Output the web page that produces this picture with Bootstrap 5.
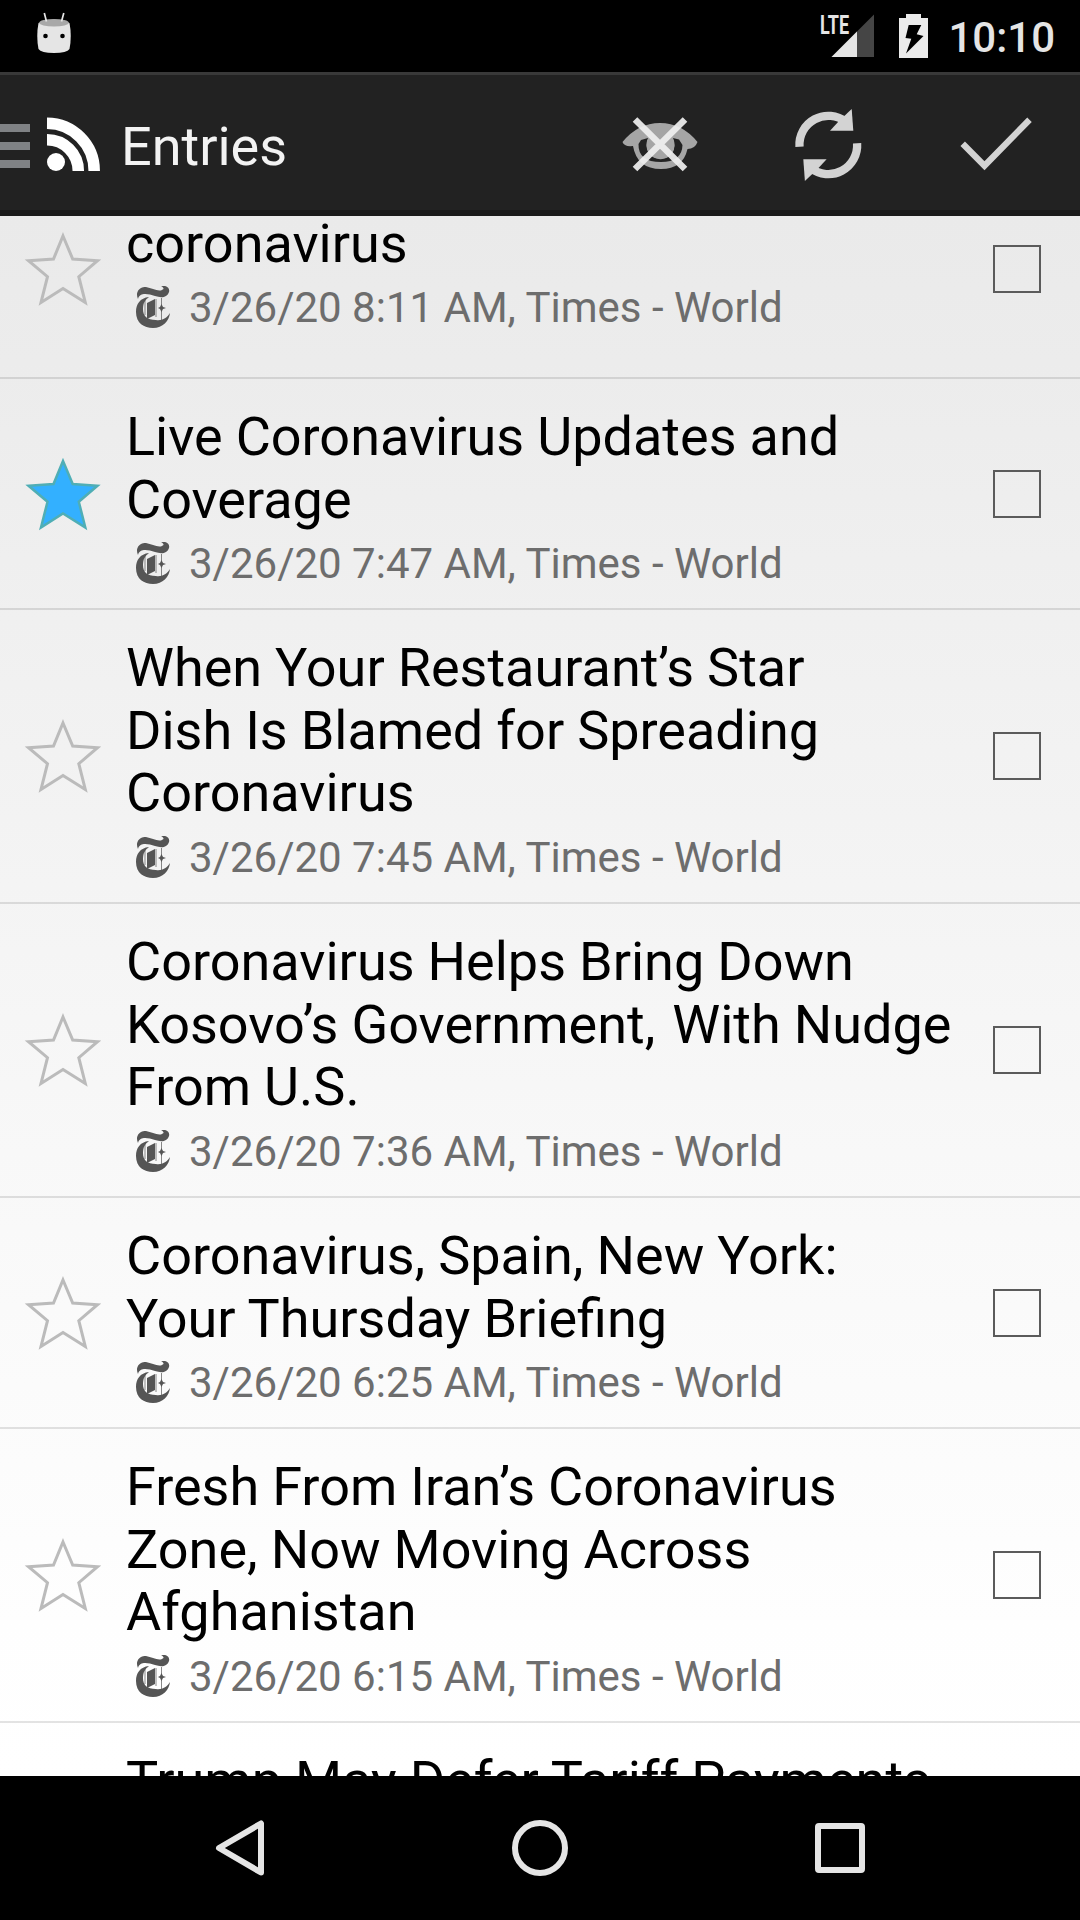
<!DOCTYPE html>
<html lang="en">
<head>
<meta charset="utf-8">
<meta name="viewport" content="width=device-width, initial-scale=1">
<title>Entries</title>
<link href="https://cdn.jsdelivr.net/npm/bootstrap@5.3.0/dist/css/bootstrap.min.css" rel="stylesheet">
<style>
body{font-family:Roboto,"Noto Sans",sans-serif;width:1080px;height:1920px;background:#000}
svg{display:block;flex:none}
.status{height:72px;padding:0 25px 0 36px;color:#e5e5e5}
.clock{font-size:42px;line-height:72px;font-weight:500;padding-top:3px;margin-left:18px}
.appbar{height:144px;background:#222;border-top:3px solid #393939;border-bottom:6px solid #1a1a1a;color:#f3f3f3}
.appbar h1{font-size:54px;line-height:63px;font-weight:400;margin-left:21px;padding-top:7px}
.action{width:168px}
.entries{height:1560px;background:linear-gradient(#eaeaea,#ededed 14%,#f1f1f1 30%,#f8f8f8 60%,#fefefe 90%,#fff);--bs-list-group-border-radius:0}
.entry{flex:none;background:none;border:0;border-bottom:2px solid rgba(0,0,0,.11);padding:26px 39px 20px 24px;color:#000}
.entry.first{margin-top:-55px;padding-top:51px;padding-bottom:45px}
.entry .title{font-size:54px;line-height:63px;margin:0 0 8px 1px;font-weight:400;white-space:nowrap;word-spacing:-.4px}
.entry .third{display:block;margin:-1px 0 9px}
.entry .gap{margin-left:4px}
.entry .partial{margin-left:102px}
.entry .meta{font-size:42px;line-height:49px;color:#6d6d6d;white-space:nowrap}
.star{margin:0 23px 6px 0;stroke-miterlimit:10}
.entry .form-check-input{width:48px;height:48px;border:2px solid #5b5b5b;border-radius:0;background:none;margin:0 0 6px;flex:none}
.favicon{margin:auto 19px auto 11px;padding-bottom:1px}
.navkeys{height:144px}
</style>
</head>
<body class="d-flex flex-column overflow-hidden">
<svg width="0" height="0" class="position-absolute">
  <symbol id="star" viewBox="0 0 78 76"><path d="M39 5 48.700 28 73.500 29.700 54.800 45.700 61.300 71.500 39 57.500 17 71.500 23.500 45.700 4.500 29.700 29.500 28Z"/></symbol>
  <symbol id="fav" viewBox="0 0 34 42">
    <path d="M2 13C-1 7 3 0 10 1C16 2 22 6 26 4C29 3 27 1 25 0C31-1 34 2 33 6C31 12 25 12 19 10C12 8 4 6 2 13Z"/>
    <path d="M13 11C4 12 0 18 0 26C0 37 8 42 17 42C27 42 33 35 34 27C31 32 26 35 20 34C11 34 7 30 7 23C7 17 9 14 13 11Z"/>
    <path d="M11 17 19 13V29L11 33Z M22 22 24 21 25.500 18 27 21 30 22 27 23 25.500 26 24 23Z"/>
    <path d="M25.500 12V34M9 14V29M20 13V31" fill="none" stroke="currentColor" stroke-width=".7"/>
  </symbol>
</svg>

<header class="status d-flex align-items-center flex-shrink-0">
  <svg width="36" height="72" viewBox="36 0 36 72">
    <path d="M38.500 23Q54 16 69.500 23Q72 36 69.500 49Q67 53 54 53Q41 53 38.500 49Q36 36 38.500 23Z" fill="#e5e5e5"/>
    <ellipse cx="54" cy="22.800" rx="14.800" ry="3.800" fill="#a8a8a8"/>
    <path d="M44.300 13 46.500 21.500M63.800 13 61.500 21.500" stroke="#e5e5e5" stroke-width="1.700"/>
    <circle cx="45.500" cy="36" r="2.300"/><circle cx="62.500" cy="36" r="2.300"/>
  </svg>
  <svg class="ms-auto" width="110" height="72" viewBox="820 0 110 72">
    <path d="M874 14.500V57H831.500Z" fill="#454545"/>
    <path d="M857 31.500V57H831.500Z" fill="#e5e5e5"/>
    <text x="820" y="33.500" font-size="26" font-weight="700" fill="#e5e5e5" textLength="29" lengthAdjust="spacingAndGlyphs">LTE</text>
    <path d="M906 14H921V18H928V58H899V18H906Z" fill="#ebebeb"/>
    <path d="M908.700 25H921.300L916.700 34.300 923.500 36 906 53.500 911.300 38.700 905.500 38Z"/>
  </svg>
  <span class="clock text-end">10:10</span>
</header>

<nav class="appbar d-flex align-items-center flex-shrink-0">
  <svg width="100" height="135" viewBox="0 75 100 135">
    <path d="M0 124H30V132H0ZM0 142H30V150H0ZM0 160H30V168H0Z" fill="#808285"/>
    <circle cx="56" cy="162" r="9" fill="#fff"/>
    <path d="M47 139.800A31.200 31.200 0 0 1 78.300 171M47 123.300A47.500 47.500 0 0 1 94.200 171" fill="none" stroke="#fff" stroke-width="11.500"/>
  </svg>
  <h1 class="mb-0">Entries</h1>
  <div class="d-flex ms-auto">
    <svg class="action" height="135" viewBox="576 75 168 135">
      <path fill="#a5a5a5" fill-rule="evenodd" d="M622.500 142Q638 123 660 123Q682 123 697.500 142Q695 149 687.500 149Q683 169 661 169Q637 169 633 146Q624 147 622.500 142ZM638.500 144Q638 162 661 162Q682 162 682.500 145L679 139.500 673 138A14 14 0 1 1 648 138L641 140Z"/>
      <path d="M648 139A14 14 0 1 0 673 139Z" fill="#a5a5a5"/>
      <path d="M635 119.500 685 169M685 119.500 635 169" stroke="#efefef" stroke-opacity=".93" stroke-width="6.500"/>
    </svg>
    <svg class="action" height="135" viewBox="744 75 168 135">
      <g id="sync"><path d="M799.500 146.700A28.800 28.800 0 0 1 846 122" fill="none" stroke="#d3d3d3" stroke-width="8.300"/><path d="M851.700 109 853.300 130.700H830L839 121Z" fill="#d3d3d3"/></g>
      <use href="#sync" transform="rotate(180 828.300 145)"/>
    </svg>
    <svg class="action" height="135" viewBox="912 75 168 135"><path d="M962.700 143.700 984.500 165.800 1029.500 119.800" fill="none" stroke="#d3d3d3" stroke-width="6.300"/></svg>
  </div>
</nav>

<main class="entries list-group overflow-hidden flex-shrink-0">
  <article class="entry first list-group-item d-flex align-items-center">
    <svg class="star" width="78" height="76" fill="none" stroke="#bbb" stroke-width="3"><use href="#star"/></svg>
    <div class="flex-grow-1"><h2 class="title">coronavirus</h2><div class="meta d-flex"><svg class="favicon" width="34" height="43" fill="#555" color="#555"><use href="#fav"/></svg>3/26/20 8:11 AM, Times - World</div></div>
    <input class="form-check-input" type="checkbox" aria-label="Select entry">
  </article>
  <article class="entry list-group-item d-flex align-items-center">
    <svg class="star" width="78" height="76" fill="#33b0ff" stroke="#4faeb5" stroke-width="2.500"><use href="#star"/></svg>
    <div class="flex-grow-1"><h2 class="title">Live Coronavirus Updates and<br>Coverage</h2><div class="meta d-flex"><svg class="favicon" width="34" height="43" fill="#555" color="#555"><use href="#fav"/></svg>3/26/20 7:47 AM, Times - World</div></div>
    <input class="form-check-input" type="checkbox" aria-label="Select entry">
  </article>
  <article class="entry list-group-item d-flex align-items-center">
    <svg class="star" width="78" height="76" fill="none" stroke="#bbb" stroke-width="3"><use href="#star"/></svg>
    <div class="flex-grow-1"><h2 class="title">When Your Restaurant’s Star<br>Dish Is Blamed for Spreading<span class="third">Coronavirus</span></h2><div class="meta d-flex"><svg class="favicon" width="34" height="43" fill="#555" color="#555"><use href="#fav"/></svg>3/26/20 7:45 AM, Times - World</div></div>
    <input class="form-check-input" type="checkbox" aria-label="Select entry">
  </article>
  <article class="entry list-group-item d-flex align-items-center">
    <svg class="star" width="78" height="76" fill="none" stroke="#bbb" stroke-width="3"><use href="#star"/></svg>
    <div class="flex-grow-1"><h2 class="title">Coronavirus Helps Bring Down<br>Kosovo’s Government, <span class="gap">With Nudge</span><span class="third">From U.S.</span></h2><div class="meta d-flex"><svg class="favicon" width="34" height="43" fill="#555" color="#555"><use href="#fav"/></svg>3/26/20 7:36 AM, Times - World</div></div>
    <input class="form-check-input" type="checkbox" aria-label="Select entry">
  </article>
  <article class="entry list-group-item d-flex align-items-center">
    <svg class="star" width="78" height="76" fill="none" stroke="#bbb" stroke-width="3"><use href="#star"/></svg>
    <div class="flex-grow-1"><h2 class="title">Coronavirus, Spain, New York:<br>Your Thursday Briefing</h2><div class="meta d-flex"><svg class="favicon" width="34" height="43" fill="#555" color="#555"><use href="#fav"/></svg>3/26/20 6:25 AM, Times - World</div></div>
    <input class="form-check-input" type="checkbox" aria-label="Select entry">
  </article>
  <article class="entry list-group-item d-flex align-items-center">
    <svg class="star" width="78" height="76" fill="none" stroke="#bbb" stroke-width="3"><use href="#star"/></svg>
    <div class="flex-grow-1"><h2 class="title">Fresh From Iran’s Coronavirus<br>Zone, Now Moving Across<span class="third">Afghanistan</span></h2><div class="meta d-flex"><svg class="favicon" width="34" height="43" fill="#555" color="#555"><use href="#fav"/></svg>3/26/20 6:15 AM, Times - World</div></div>
    <input class="form-check-input" type="checkbox" aria-label="Select entry">
  </article>
  <article class="entry list-group-item"><h2 class="title partial">Trump May Defer Tariff Payments</h2></article>
</main>

<footer class="navkeys flex-shrink-0 d-flex justify-content-center">
  <svg width="300" height="144" viewBox="90 1776 300 144"><path d="M261 1823.500V1872.500L219 1848Z" fill="none" stroke="#e5e5e5" stroke-width="6" stroke-linejoin="round"/></svg>
  <svg width="300" height="144" viewBox="390 1776 300 144"><circle cx="540" cy="1848" r="25" fill="none" stroke="#e5e5e5" stroke-width="6"/></svg>
  <svg width="300" height="144" viewBox="690 1776 300 144"><rect x="818" y="1826" width="44" height="44" rx="1" fill="none" stroke="#e5e5e5" stroke-width="6" stroke-linejoin="round"/></svg>
</footer>
<script src="https://cdn.jsdelivr.net/npm/bootstrap@5.3.0/dist/js/bootstrap.bundle.min.js"></script>
</body>
</html>
